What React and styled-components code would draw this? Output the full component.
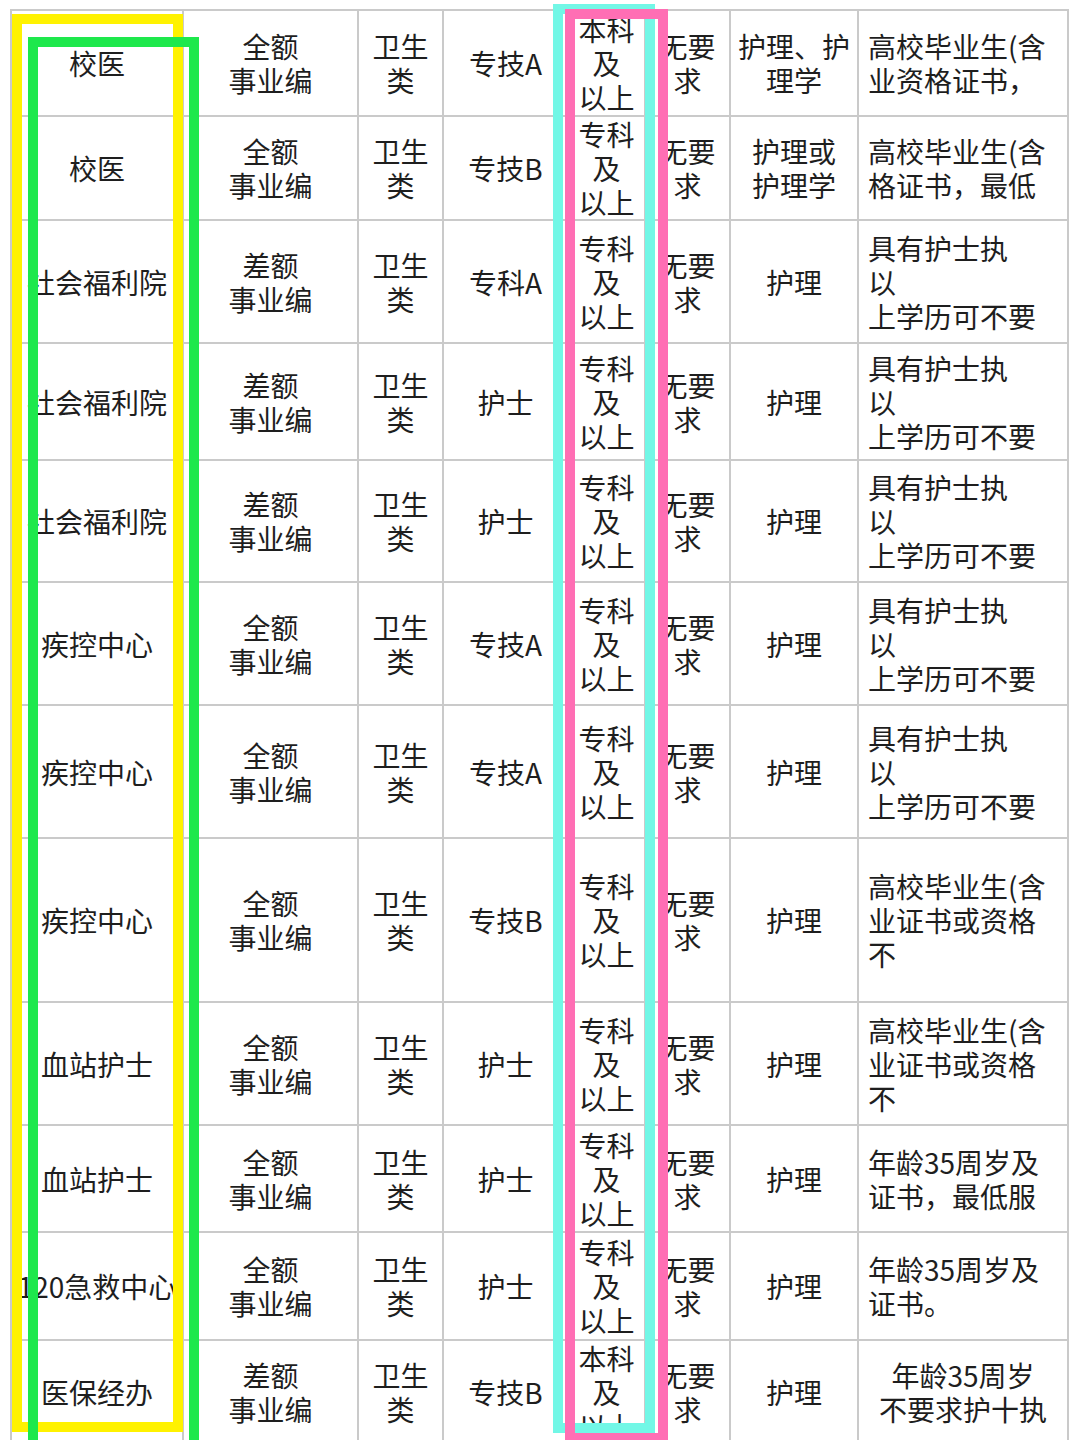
import React from 'react'
import styled, { createGlobalStyle } from 'styled-components'

const GlobalStyle = createGlobalStyle`
  html, body {
    margin: 0;
    padding: 0;
    background: #fff;
  }
  body {
    font-family: "Noto Sans CJK SC", "Noto Sans", sans-serif;
    color: #1e1e1e;
  }
`

const COLS = '172px 175px 85px 125px 77px 85px 128px 210px'
const LINE = '#cacaca'

const Page = styled.div`
  position: relative;
  width: 1080px;
  height: 1440px;
  overflow: hidden;
  padding: 9px 0 0 10px;
  box-sizing: border-box;
`

const Table = styled.div`
  width: 1059px;
  border-top: 2px solid ${LINE};
  border-left: 2px solid ${LINE};
  box-sizing: border-box;
`

const Row = styled.div`
  display: grid;
  grid-template-columns: ${COLS};
  height: ${p => p.$h}px;
`

const Cell = styled.div`
  box-sizing: border-box;
  border-right: 2px solid ${LINE};
  border-bottom: 2px solid ${LINE};
  display: flex;
  flex-direction: column;
  justify-content: center;
  align-items: ${p => (p.$left ? 'flex-start' : 'center')};
  padding-left: ${p => (p.$left ? '9px' : '0')};
  font-size: 28px;
  line-height: 34px;
  text-align: ${p => (p.$left ? 'left' : 'center')};
  white-space: nowrap;
  overflow: visible;
`

const Line = styled.span`
  display: block;
  height: 34px;
`

const Frame = styled.div`
  position: absolute;
  left: ${p => p.$x}px;
  top: ${p => p.$y}px;
  width: ${p => p.$w}px;
  height: ${p => p.$h}px;
  border: 10px solid ${p => p.$c};
  box-sizing: border-box;
  pointer-events: none;
`

const QE = ['全额', '事业编']
const CE = ['差额', '事业编']
const WS = ['卫生', '类']
const ZK = ['专科', '及', '以上']
const BK = ['本科', '及', '以上']
const WY = ['无要', '求']
const NURSE = ['具有护士执', '以', '上学历可不要']
const GRAD = ['高校毕业生(含', '业证书或资格', '不']

const rows = [
  { h: 106, c: [['校医'], QE, WS, ['专技A'], BK, WY, ['护理、护', '理学'], ['高校毕业生(含', '业资格证书，']] },
  { h: 104, c: [['校医'], QE, WS, ['专技B'], ZK, WY, ['护理或', '护理学'], ['高校毕业生(含', '格证书，最低']] },
  { h: 123, c: [['社会福利院'], CE, WS, ['专科A'], ZK, WY, ['护理'], NURSE] },
  { h: 117, c: [['社会福利院'], CE, WS, ['护士'], ZK, WY, ['护理'], NURSE] },
  { h: 122, c: [['社会福利院'], CE, WS, ['护士'], ZK, WY, ['护理'], NURSE] },
  { h: 123, c: [['疾控中心'], QE, WS, ['专技A'], ZK, WY, ['护理'], NURSE] },
  { h: 133, c: [['疾控中心'], QE, WS, ['专技A'], ZK, WY, ['护理'], NURSE] },
  { h: 164, c: [['疾控中心'], QE, WS, ['专技B'], ZK, WY, ['护理'], GRAD] },
  { h: 123, c: [['血站护士'], QE, WS, ['护士'], ZK, WY, ['护理'], GRAD] },
  { h: 107, c: [['血站护士'], QE, WS, ['护士'], ZK, WY, ['护理'], ['年龄35周岁及', '证书，最低服']] },
  { h: 108, c: [['120急救中心'], QE, WS, ['护士'], ZK, WY, ['护理'], ['年龄35周岁及', '证书。']] },
  { h: 104, c: [['医保经办'], CE, WS, ['专技B'], BK, WY, ['护理'], ['年龄35周岁', '不要求护十执']], last: true },
]

export default function App() {
  return (
    <Page>
      <GlobalStyle />
      <Table>
        {rows.map((r, i) => (
          <Row key={i} $h={r.h}>
            {r.c.map((lines, j) => (
              <Cell key={j} $left={j === 7 && !r.last}>
                {lines.map((t, k) => (
                  <Line key={k}>{t}</Line>
                ))}
              </Cell>
            ))}
          </Row>
        ))}
      </Table>
      <Frame $x={12} $y={14} $w={171} $h={1418} $c="#fff200" />
      <Frame $x={28} $y={37} $w={171} $h={1420} $c="#1ee84c" />
      <Frame $x={553} $y={4} $w={102} $h={1429} $c="#72f7e6" />
      <Frame $x={565} $y={9} $w={103} $h={1434} $c="#ff6eb4" />
    </Page>
  )
}
